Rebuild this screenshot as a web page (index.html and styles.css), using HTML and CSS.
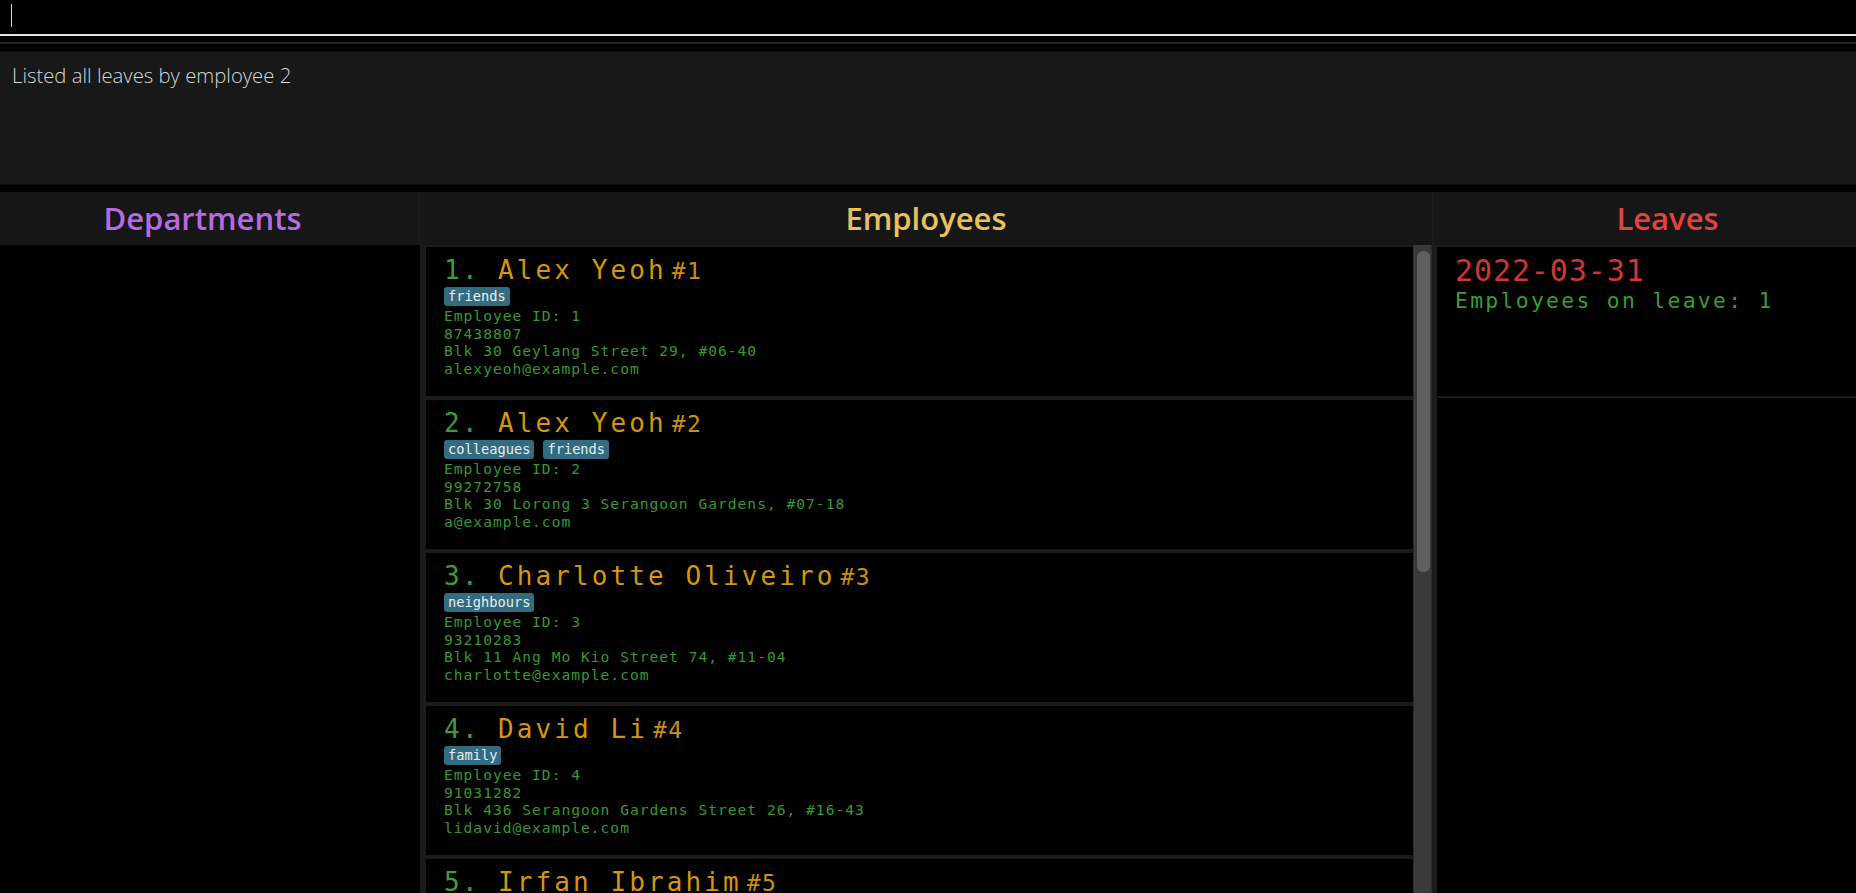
FILE: index.html
```html
<!DOCTYPE html>
<html>
<head>
<meta charset="utf-8">
<link rel="stylesheet" href="styles.css">
</head>
<body>
<div class="app">
  <div class="command"><div class="caret"></div></div>
  <div class="command-line"></div>
  <div class="band"></div>
  <div class="result">Listed all leaves by employee 2</div>
  <div class="main">
    <section class="col dept">
      <div class="col-head"><span class="title title-dept">Departments</span></div>
      <div class="dept-body"></div>
    </section>
    <section class="col emp">
      <div class="col-head"><span class="title title-emp">Employees</span></div>
      <div class="emp-body">
        <div class="emp-list">
          <div class="card">
            <div class="name-row"><span class="idx">1. </span><span class="name">Alex Yeoh</span><span class="hash">#1</span></div>
            <div class="tags"><span class="tag">friends</span></div>
            <div class="info">Employee ID: 1</div>
            <div class="info">87438807</div>
            <div class="info">Blk 30 Geylang Street 29, #06-40</div>
            <div class="info">alexyeoh@example.com</div>
          </div>
          <div class="card">
            <div class="name-row"><span class="idx">2. </span><span class="name">Alex Yeoh</span><span class="hash">#2</span></div>
            <div class="tags"><span class="tag">colleagues</span><span class="tag">friends</span></div>
            <div class="info">Employee ID: 2</div>
            <div class="info">99272758</div>
            <div class="info">Blk 30 Lorong 3 Serangoon Gardens, #07-18</div>
            <div class="info">a@example.com</div>
          </div>
          <div class="card">
            <div class="name-row"><span class="idx">3. </span><span class="name">Charlotte Oliveiro</span><span class="hash">#3</span></div>
            <div class="tags"><span class="tag">neighbours</span></div>
            <div class="info">Employee ID: 3</div>
            <div class="info">93210283</div>
            <div class="info">Blk 11 Ang Mo Kio Street 74, #11-04</div>
            <div class="info">charlotte@example.com</div>
          </div>
          <div class="card">
            <div class="name-row"><span class="idx">4. </span><span class="name">David Li</span><span class="hash">#4</span></div>
            <div class="tags"><span class="tag">family</span></div>
            <div class="info">Employee ID: 4</div>
            <div class="info">91031282</div>
            <div class="info">Blk 436 Serangoon Gardens Street 26, #16-43</div>
            <div class="info">lidavid@example.com</div>
          </div>
          <div class="card">
            <div class="name-row"><span class="idx">5. </span><span class="name">Irfan Ibrahim</span><span class="hash">#5</span></div>
            <div class="tags"><span class="tag">classmates</span></div>
            <div class="info">Employee ID: 5</div>
            <div class="info">92492021</div>
            <div class="info">Blk 47 Tampines Street 20, #17-35</div>
            <div class="info">irfan@example.com</div>
          </div>
        </div>
        <div class="scrollbar"><div class="thumb"></div></div>
      </div>
    </section>
    <section class="col leaves">
      <div class="col-head"><span class="title title-leaves">Leaves</span></div>
      <div class="leaves-body">
        <div class="leave-card">
          <div class="date">2022-03-31</div>
          <div class="count">Employees on leave: 1</div>
        </div>
      </div>
    </section>
  </div>
</div>
</body>
</html>
```

FILE: styles.css
```css
html, body {
  margin: 0;
  padding: 0;
  background: #000;
  height: 100%;
  overflow: hidden;
}

.app {
  display: flex;
  flex-direction: column;
  height: 893px;
  overflow: hidden;
}

.command {
  height: 34px;
  box-sizing: border-box;
  padding: 4px 0 0 11px;
  background: #000;
  display: flex;
  align-items: flex-start;
}

.caret {
  width: 1px;
  height: 23px;
  background: #d8d8d8;
}

.command-line {
  height: 2px;
  background: #e6e6e6;
}

.band {
  height: 15px;
  box-sizing: border-box;
  border-top: 6px solid #000;
  border-bottom: 7px solid #000;
  background: #232323;
}

.result {
  height: 134px;
  box-sizing: border-box;
  border-top: 1px solid #0c0c0c;
  border-bottom: 1px solid #0c0c0c;
  background: #181818;
  padding: 10px 0 0 12px;
  font-family: "Open Sans", sans-serif;
  font-weight: 300;
  font-size: 20.3px;
  line-height: 26px;
  color: #d6d6d6;
  margin-bottom: 7px;
}

.main {
  flex: 1;
  display: flex;
  min-height: 0;
}

.col {
  display: flex;
  flex-direction: column;
  min-height: 0;
}

.dept { width: 420px; }
.emp { width: 1013px; }
.leaves { flex: 1; }

.col-head {
  height: 53px;
  box-sizing: border-box;
  background: #161616;
  border-right: 1px solid #1e1e1e;
  display: flex;
  justify-content: center;
  align-items: center;
  font-family: "Open Sans", sans-serif;
  font-weight: 600;
  font-size: 31px;
  line-height: 53px;
}

.dept .col-head { padding-right: 14px; }
.leaves .col-head { padding-left: 46px; border-right: 0; }

.title-dept { color: #b46be2; }
.title-emp { color: #e6c25d; }
.title-leaves { color: #e04343; }

.dept-body {
  flex: 1;
  background: #000;
}

.emp-body {
  flex: 1;
  display: flex;
  min-height: 0;
  background: #1b1b1b;
  padding-left: 6px;
  padding-right: 1px;
}

.emp-list {
  flex: 1;
  padding-top: 2px;
  overflow: hidden;
  background: #1b1b1b;
}

.card {
  height: 149px;
  box-sizing: border-box;
  margin-bottom: 4px;
  background: #000;
  padding: 8px 0 0 18px;
  font-family: "DejaVu Sans Mono", monospace;
  overflow: hidden;
}

.name-row {
  display: flex;
  align-items: baseline;
  height: 30px;
  line-height: 30px;
  white-space: pre;
}

.idx {
  font-size: 26px;
  letter-spacing: 2.3px;
  color: #3d9c38;
}

.name {
  font-size: 26px;
  letter-spacing: 3.1px;
  color: #d4960c;
}

.hash {
  font-size: 23px;
  letter-spacing: 1.5px;
  color: #c98f12;
  margin-left: 5px;
}

.tags {
  display: flex;
  gap: 9px;
  margin-top: 2px;
  margin-bottom: 1px;
}

.tag {
  font-size: 13.7px;
  line-height: 19px;
  height: 19px;
  padding: 0 4px;
  background: #336b80;
  color: #e8eef0;
  border-radius: 3px;
}

.info {
  font-size: 14.6px;
  line-height: 17.7px;
  letter-spacing: 1px;
  color: #38982f;
  white-space: pre;
}

.scrollbar {
  width: 19px;
  box-sizing: border-box;
  background: #393939;
  border-left: 1px solid #2b2b2b;
  border-right: 1px solid #2b2b2b;
  padding: 6px 1px 0 3px;
}

.thumb {
  height: 321px;
  background: #5f5f5f;
  border-radius: 6px;
}

.leaves-body {
  flex: 1;
  background: #000;
  border-left: 4px solid #1b1b1b;
  padding-top: 2px;
  box-shadow: inset 0 2px 0 #1b1b1b;
}

.leave-card {
  height: 151px;
  box-sizing: border-box;
  border-bottom: 2px solid #1a1a1a;
  padding: 7px 0 0 18px;
  font-family: "DejaVu Sans Mono", monospace;
}

.date {
  font-size: 30px;
  line-height: 34px;
  letter-spacing: 0.9px;
  color: #d23434;
}

.count {
  font-size: 21.4px;
  line-height: 26px;
  letter-spacing: 2.3px;
  color: #3a9c35;
}
```
